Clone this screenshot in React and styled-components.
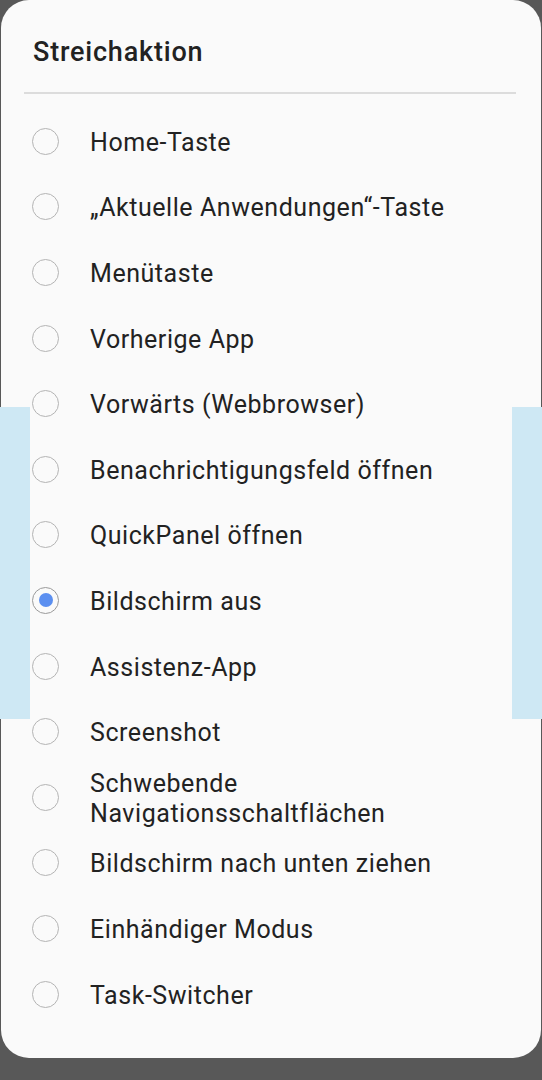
import React from "react";
import styled, { createGlobalStyle } from "styled-components";

const Global = createGlobalStyle`
  html, body { margin: 0; padding: 0; background: #585858; }
  body { font-family: Roboto, "Noto Sans", sans-serif; }
`;

const Screen = styled.div`
  position: relative;
  width: 542px;
  height: 1080px;
  background: #585858;
  overflow: hidden;
`;

const Dialog = styled.div`
  margin: 0 1px;
  height: 1058px;
  box-sizing: border-box;
  background: #fafafa;
  border-radius: 28px;
  display: flex;
  flex-direction: column;
`;

const Title = styled.h1`
  margin: 0;
  padding: 35px 0 0 32px;
  height: 57px;
  box-sizing: content-box;
  font-size: 27px;
  font-weight: 500;
  color: #222;
  letter-spacing: 0.8px;
  line-height: 34px;
`;

const Divider = styled.div`
  margin: 0 25px 0 23px;
  height: 1.5px;
  background: #dcdcdc;
`;

const List = styled.div`
  display: flex;
  flex-direction: column;
  padding-top: 15px;
`;

const Row = styled.div`
  display: flex;
  align-items: center;
  height: 65.6px;
  padding-left: 31px;
`;

const Radio = styled.span`
  box-sizing: border-box;
  width: 27px;
  height: 27px;
  border-radius: 50%;
  border: 1.3px solid ${(p) => (p.$checked ? "#9a9a9a" : "#b4b4b4")};
  display: flex;
  align-items: center;
  justify-content: center;
  flex-shrink: 0;
  &::after {
    content: "";
    display: ${(p) => (p.$checked ? "block" : "none")};
    width: 14px;
    height: 14px;
    border-radius: 50%;
    background: #5b8ff0;
  }
`;

const Label = styled.span`
  margin-left: 31px;
  padding-top: 3px;
  font-size: 25px;
  line-height: 30px;
  letter-spacing: 0.55px;
  color: #222;
`;

const EdgeStrip = styled.div`
  position: absolute;
  top: 407px;
  height: 312px;
  width: 30px;
  background: #cee8f4;
  ${(p) => (p.$side === "left" ? "left: 0;" : "right: 0;")}
`;

const items = [
  "Home-Taste",
  "„Aktuelle Anwendungen“-Taste",
  "Menütaste",
  "Vorherige App",
  "Vorwärts (Webbrowser)",
  "Benachrichtigungsfeld öffnen",
  "QuickPanel öffnen",
  "Bildschirm aus",
  "Assistenz-App",
  "Screenshot",
  ["Schwebende", "Navigationsschaltflächen"],
  "Bildschirm nach unten ziehen",
  "Einhändiger Modus",
  "Task-Switcher",
];

export default function App() {
  return (
    <Screen>
      <Global />
      <Dialog>
        <Title>Streichaktion</Title>
        <Divider />
        <List>
          {items.map((it, i) => (
            <Row key={i}>
              <Radio $checked={i === 7} />
              <Label>
                {Array.isArray(it) ? (
                  <>
                    {it[0]}
                    <br />
                    {it[1]}
                  </>
                ) : (
                  it
                )}
              </Label>
            </Row>
          ))}
        </List>
      </Dialog>
      <EdgeStrip $side="left" />
      <EdgeStrip $side="right" />
    </Screen>
  );
}
